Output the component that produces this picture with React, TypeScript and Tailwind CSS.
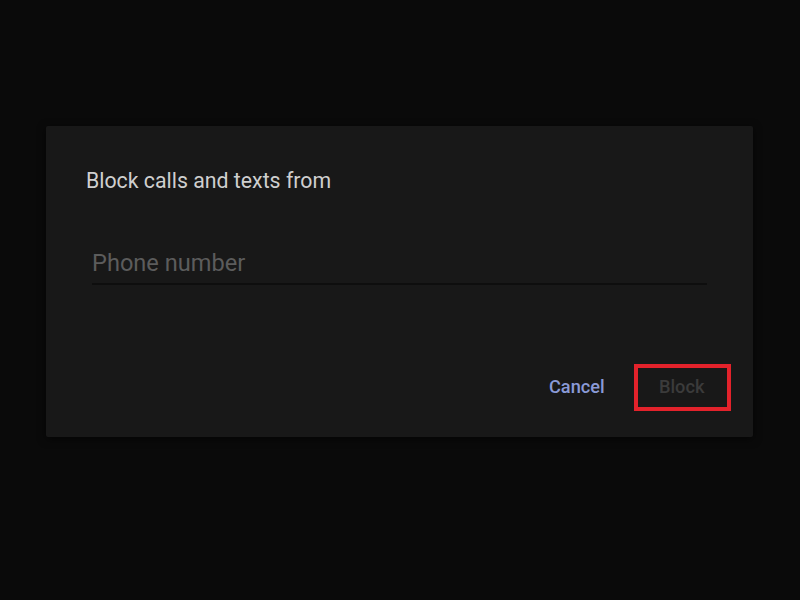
export default function App() {
  return (
    <div className="w-[800px] h-[600px] bg-[#0a0a0a] relative" style={{ fontFamily: 'Roboto, "Noto Sans", sans-serif' }}>
      <div className="absolute left-[46px] top-[126px] w-[707px] h-[311px] bg-[#181818] rounded-[2px] shadow-[0_2px_8px_rgba(0,0,0,0.6)]">
        <div className="pl-[40px] pt-[41px] text-[21.3px] leading-[28px] text-[#cfcfcf]">Block calls and texts from</div>
        <div className="ml-[46px] mr-[46px] mt-[52px] border-b-2 border-[#0e0e0e] pb-[4px]">
          <div className="text-[23.6px] leading-[32px] text-[#5c5c5c]">Phone number</div>
        </div>
        <div className="absolute left-[588px] top-[238px] w-[97px] h-[47px] border-[4px] border-[#e3222b]" />
        <div className="absolute left-[503px] top-[249px] text-[18.2px] leading-[24px] font-medium text-[#8a9ad6]">Cancel</div>
        <div className="absolute left-[613px] top-[249px] text-[18.2px] leading-[24px] font-medium text-[#3b3b3b]">Block</div>
      </div>
    </div>
  );
}
